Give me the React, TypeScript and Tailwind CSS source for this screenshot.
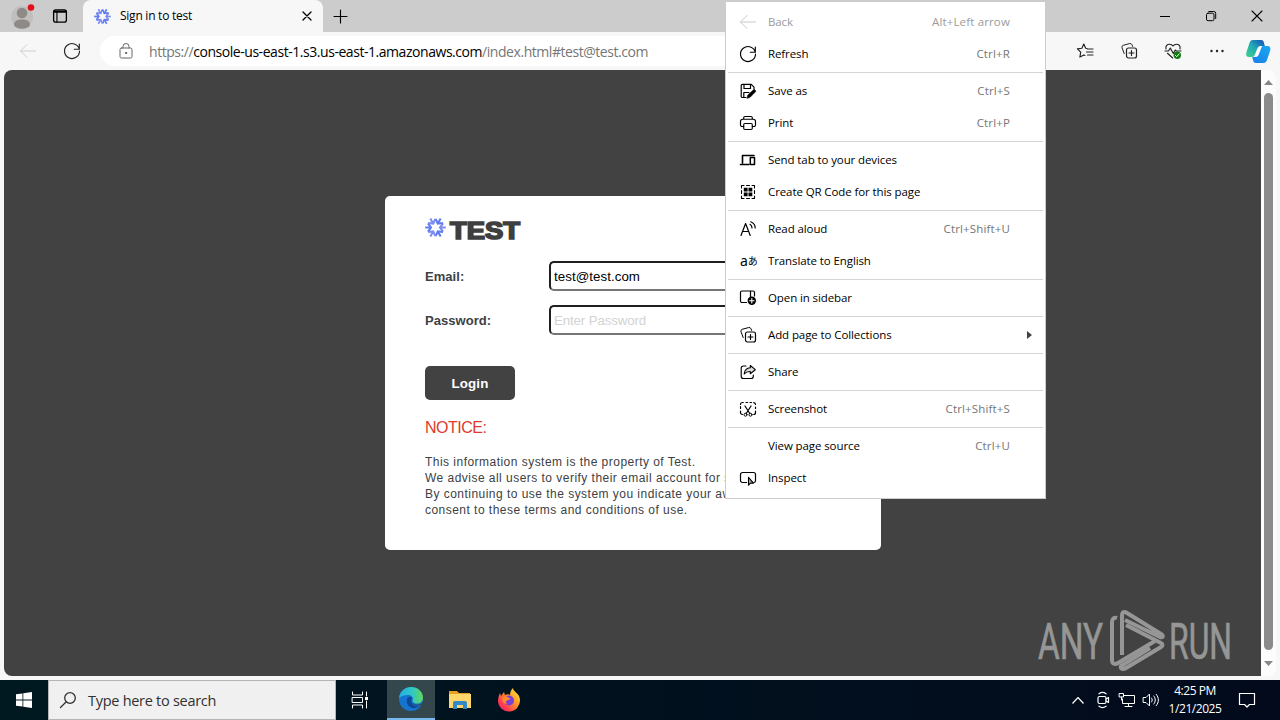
import type { ReactNode } from "react";

type IconProps = { children: ReactNode; className?: string; size?: number };

// Thin line icon on a 16px grid, the base of most glyphs in the window
function Icon({ children, className = "", size = 16 }: IconProps) {
  return (
    <svg
      width={size}
      height={size}
      viewBox="0 0 16 16"
      fill="none"
      stroke="currentColor"
      strokeLinecap="round"
      strokeLinejoin="round"
      className={`shrink-0 overflow-visible ${className}`}
    >
      {children}
    </svg>
  );
}

const BackIcon = () => (
  <Icon>
    <path d="M15.5 8H.8M7 1.5.5 8 7 14.5" />
  </Icon>
);

const RefreshIcon = () => (
  <Icon>
    <path d="M15.3 6.3A7.5 7.5 0 1 0 15.5 8M15.3 1v5.2h-5" strokeWidth="1.15" />
  </Icon>
);

const CollectionsIcon = () => (
  <Icon>
    <path d="M3.2 10.5 1 4.8a2 2 0 0 1 1.2-2.5L8.5.6a2 2 0 0 1 2.5 1.2l.6 1.6" />
    <rect x="5.5" y="5" width="10" height="10" rx="2" strokeWidth="1.2" />
    <path d="M10.5 7.5v5M8 10h5" strokeWidth="1.2" />
  </Icon>
);

const SaveIcon = () => (
  <Icon>
    <path d="M6 14.5H2.5a1.3 1.3 0 0 1-1.3-1.3V2.7a1.3 1.3 0 0 1 1.3-1.3h8.8l2.7 2.7v2M4 1.5v4h6.5v-4M3.8 14.3V9.5H9" strokeWidth="1.2" />
    <path d="m7 15.2.8-3.2 5.7-5.2c1-.8 2.8.8 2 2l-5.3 5.4z" fill="currentColor" strokeWidth=".5" />
  </Icon>
);

const PrintIcon = () => (
  <Icon>
    <path d="M3.7 4.2V2.7c0-.7.5-1.2 1.2-1.2h6.2c.7 0 1.2.5 1.2 1.2v1.5M3.7 11.5H2A1.5 1.5 0 0 1 .5 10V6.500c0-1.300 1-2.300 2.300-2.300h10.400c1.300 0 2.300 1 2.300 2.300V10a1.500 1.500 0 0 1-1.500 1.500h-1.700" strokeWidth="1.15" />
    <rect x="3.7" y="8.5" width="8.6" height="6" rx="1.2" strokeWidth="1.15" />
  </Icon>
);

const DevicesIcon = () => (
  <Icon>
    <path d="M2.5 11V3.500h11.500M.5 12.500h8.500" strokeWidth="1.6" />
    <rect x="10.3" y="5.5" width="4.2" height="7" strokeWidth="1.5" />
  </Icon>
);

const QrIcon = () => (
  <Icon>
    <path d="M1.500 4V1.500H4M12 1.500h2.500V4M14.500 12v2.500H12M4 14.500H1.500V12M6.500 1.500h3M6.500 14.500h3M1.500 6.500v3M14.500 6.500v3" strokeWidth="1.1" />
    <path d="M3.800 3.800h3.800v3.800H3.800zM8.500 3.800h3.800v3.800H8.500zM3.800 8.500h3.800v3.800H3.800zM8.500 8.500h3.800v3.800H8.500z" fill="currentColor" stroke="none" />
  </Icon>
);

const ReadAloudIcon = () => (
  <Icon>
    <path d="m1 14.500 4.600-12 4.600 12M2.700 10.500h5.800M10 3.300c1.300.7 2 2 2 3.700M10.800.8C13.700 2 15.200 4.200 15.200 7" strokeWidth="1.2" />
  </Icon>
);

const TranslateIcon = () => (
  <span className="flex h-4 w-4 shrink-0 items-center font-['Noto_Sans','Noto_Sans_CJK_JP',sans-serif] leading-none">
    <span className="-mt-px text-[14px]">a</span>
    <span className="text-[10px]">あ</span>
  </span>
);

const SidebarIcon = () => (
  <Icon>
    <path d="M6.500 12.500H2A1.500 1.500 0 0 1 .5 11V2.500A1.500 1.500 0 0 1 2 1h11a1.500 1.500 0 0 1 1.500 1.500V6M10.500 1v6" strokeWidth="1.2" />
    <circle cx="11.800" cy="10.800" r="4.200" fill="currentColor" stroke="none" />
    <path d="M11.800 8.600V13M9.600 10.800H14" stroke="white" strokeWidth="1.1" />
  </Icon>
);

const ShareIcon = () => (
  <Icon>
    <path d="M6 2H3.500a2.300 2.300 0 0 0-2.300 2.300v7.900a2.300 2.300 0 0 0 2.300 2.300h7.500a2.300 2.300 0 0 0 2.300-2.300V11" strokeWidth="1.15" />
    <path d="M10.300 1.500 15.300 5.700l-5 4V7.500C7.500 7.300 5.800 8.200 4.200 10c.3-3.800 2.500-5.900 6.100-6.200z" fill="#ddd" strokeWidth="1.1" />
  </Icon>
);

const ScreenshotIcon = () => (
  <Icon>
    <path d="M2.500 13.500A2 2 0 0 1 .5 11.500V10M.5 7.500V5.700M.5 3.500c0-1 .8-2 2-2h.8M6 1.500h1.600M10 1.500h1.500M13.700 1.600c1 .1 1.800.9 1.800 1.900M15.500 6v1.500M15.500 10v1.500c0 1-.7 2-1.800 2" strokeWidth="1.2" />
    <path d="m5 5 4.800 7.500M11 5l-4.800 7.500" strokeWidth="1.2" />
    <circle cx="5.500" cy="13.700" r="1.500" />
    <circle cx="10.500" cy="13.700" r="1.500" />
  </Icon>
);

const InspectIcon = () => (
  <Icon>
    <path d="M6.500 12.500h-4a2 2 0 0 1-2-2v-6a2 2 0 0 1 2-2h11a2 2 0 0 1 2 2v6c0 1-.5 1.800-1.500 2" strokeWidth="1.2" />
    <path d="M8.500 7.300v7.900l2-2.100h3z" fill="#aaa" strokeWidth="1.1" />
  </Icon>
);

type MenuItem = { label: string; icon?: ReactNode; shortcut?: string; disabled?: boolean; submenu?: boolean };

const MENU_GROUPS: MenuItem[][] = [
  [
    { label: "Back", icon: <BackIcon />, shortcut: "Alt+Left arrow", disabled: true },
    { label: "Refresh", icon: <RefreshIcon />, shortcut: "Ctrl+R" },
  ],
  [
    { label: "Save as", icon: <SaveIcon />, shortcut: "Ctrl+S" },
    { label: "Print", icon: <PrintIcon />, shortcut: "Ctrl+P" },
  ],
  [
    { label: "Send tab to your devices", icon: <DevicesIcon /> },
    { label: "Create QR Code for this page", icon: <QrIcon /> },
  ],
  [
    { label: "Read aloud", icon: <ReadAloudIcon />, shortcut: "Ctrl+Shift+U" },
    { label: "Translate to English", icon: <TranslateIcon /> },
  ],
  [{ label: "Open in sidebar", icon: <SidebarIcon /> }],
  [{ label: "Add page to Collections", icon: <CollectionsIcon />, submenu: true }],
  [{ label: "Share", icon: <ShareIcon /> }],
  [{ label: "Screenshot", icon: <ScreenshotIcon />, shortcut: "Ctrl+Shift+S" }],
  [
    { label: "View page source", shortcut: "Ctrl+U" },
    { label: "Inspect", icon: <InspectIcon /> },
  ],
];

function ContextMenu() {
  return (
    <div className="absolute left-[725px] top-px w-[321px] border border-[#ccc] bg-white py-1 text-[11.5px] tracking-[-0.1px] text-black">
      {MENU_GROUPS.map((group, i) => (
        <div key={group[0].label}>
          {i > 0 && <div className="mx-[2px] my-[2px] h-px bg-[#d4d4d4]" />}
          {group.map((item) => (
            <div key={item.label} className={`flex h-8 items-center pl-[14px] ${item.disabled ? "text-[#9b9b9b]" : ""}`}>
              <span className={`w-7 ${item.disabled ? "text-[#c8c8c8]" : ""}`}>{item.icon}</span>
              <span className="flex-1 whitespace-nowrap">{item.label}</span>
              {item.shortcut && (
                <span className={`mr-[35px] tracking-[0.15px] ${item.disabled ? "" : "text-[#767676]"}`}>{item.shortcut}</span>
              )}
              {item.submenu && (
                <svg width="5" height="8" className="mr-[13px]">
                  <path d="M0 0l5 4-5 4z" fill="#444" />
                </svg>
              )}
            </div>
          ))}
        </div>
      ))}
    </div>
  );
}

// Six-armed snowflake mark shared by the tab and the login card
function SnowLogo({ size }: { size: number }) {
  return (
    <svg width={size} height={size} viewBox="0 0 20 20" fill="none" className="shrink-0">
      {[0, 60, 120, 180, 240, 300].map((angle) => (
        <g key={angle} transform={`rotate(${angle} 10 10)`} stroke={angle % 120 ? "#5f7cf2" : "#7d8cf0"}>
          <path d="M14.5 10h5.3" strokeWidth="2" />
          <path d="M17.2 6 14.300 10l2.900 4" strokeWidth="2" />
        </g>
      ))}
    </svg>
  );
}

function TabStrip() {
  return (
    <div className="flex h-8 bg-[#ccc]">
      <div className="flex w-[83px] items-center">
        <svg width="24" height="26" viewBox="0 0 24 26" className="ml-[11px] mt-px">
          <circle cx="11" cy="13" r="11" fill="#c1bfbd" />
          <circle cx="11" cy="9" r="5.300" fill="#8d8a88" />
          <path d="M3 21c0-4 3-5.500 8-5.500s8 1.500 8 5.500c-2 5-14 5-16 0z" fill="#8d8a88" />
          <circle cx="20" cy="3.500" r="3.300" fill="#e3101b" />
        </svg>
        <Icon className="ml-[18px]" size={14}>
          <rect x=".7" y="1" width="14.600" height="14" rx="2.500" strokeWidth="1.500" />
          <path d="M1.500 3h13" strokeWidth="2.500" />
          <path d="M4.500 4v11" strokeWidth="1.300" />
        </Icon>
      </div>
      <div className="flex w-[240px] items-center rounded-t-lg bg-[#f7f7f7] pl-[11px]">
        <SnowLogo size={17} />
        <span className="ml-[9px] flex-1 text-[12px] tracking-[-0.25px] text-black">Sign in to test</span>
        <Icon size={8} className="mr-3">
          <path d="m0 0 16 16M16 0 0 16" strokeWidth="2.600" />
        </Icon>
      </div>
      <div className="flex flex-1 items-center pl-[11px]">
        <Icon size={13}>
          <path d="M8 0v16M0 8h16" strokeWidth="1.400" />
        </Icon>
        <div className="ml-auto flex items-center gap-9 pr-[18px]">
          <svg width="10" height="10">
            <path d="M0 5.500h10" stroke="black" />
          </svg>
          <Icon size={10}>
            <rect x=".8" y="3.500" width="12" height="12" rx="2.500" strokeWidth="1.600" />
            <path d="M4.500.8h8A3 3 0 0 1 15.500 4v8" strokeWidth="1.600" />
          </Icon>
          <Icon size={10}>
            <path d="m0 0 16 16M16 0 0 16" strokeWidth="1.700" />
          </Icon>
        </div>
      </div>
    </div>
  );
}

function Toolbar() {
  return (
    <div className="flex h-[38px] items-center bg-[#f7f7f7]">
      <div className="flex w-[100px] gap-7 pl-5 text-[#222]">
        <span className="text-[#cfcfcf]"><BackIcon /></span>
        <RefreshIcon />
      </div>
      <div className="flex h-[30px] w-[860px] items-center rounded-full bg-white pl-[18px]">
        <Icon className="text-[#666]">
          <rect x="2" y="5" width="12" height="10" rx="1.500" />
          <path d="M5 5V3.500a3 3 0 0 1 6 0V5" />
          <circle cx="8" cy="10" r=".7" fill="currentColor" />
        </Icon>
        <div className="ml-[15px] whitespace-nowrap text-[14px] tracking-[-0.45px] text-[#767676]">
          https://<span className="text-black">console-us-east-1.s3.us-east-1.amazonaws.com</span>/index.html#test@test.com
        </div>
      </div>
      <div className="ml-auto flex items-center gap-7 pr-[9px] text-[#222]">
        <Icon className="mr-[12px]">
          <rect x="4" y="2" width="15" height="12" rx="2" />
        </Icon>
        <Icon>
          <path d="M10 5.500 8.700 5.200 6.800 1 4.900 5.200.4 5.900l3.300 3.300-.8 4.900 4-2.200 1 .5M10.500 6H16M9.500 9H16M10.500 12H16" strokeWidth="1.150" />
        </Icon>
        <CollectionsIcon />
        <Icon>
          <path d="M1 6C.3 3 2.300 1.200 4.500 1.200 6.300 1.200 7.300 2 8 3c.7-1 1.700-1.800 3.500-1.800 2.200 0 4.200 1.800 3.500 4.800M0 8h3.500L5.300 5l3 5.500L10.300 7l1 1H16M2.500 10.300 7.700 15" strokeWidth="1.150" />
          <circle cx="12.300" cy="12.300" r="3.700" fill="#107c10" stroke="none" />
          <path d="m10.500 12.500 1.200 1.200 2.400-2.800" stroke="white" />
        </Icon>
        <svg width="14" height="4" className="mx-px" fill="#222">
          <circle cx="1.500" cy="2" r="1.200" />
          <circle cx="7" cy="2" r="1.200" />
          <circle cx="12.500" cy="2" r="1.200" />
        </svg>
        <svg width="25" height="23" viewBox="0 0 25 23" className="-ml-[7px] overflow-visible">
          <defs>
            <linearGradient id="pilotA" x1="0" y1="1" x2="1" y2="0">
              <stop stopColor="#45d28c" />
              <stop offset=".5" stopColor="#20a9b5" />
              <stop offset="1" stopColor="#1649b8" />
            </linearGradient>
            <linearGradient id="pilotB" x1="0" y1="1" x2="1" y2="0">
              <stop stopColor="#187fe9" />
              <stop offset="1" stopColor="#1ba9ef" />
            </linearGradient>
          </defs>
          <path d="M7 0h8c2 0 2.500 1 3 3l.8 3h-4c-2 0-3 1-3.700 3l-2 5c-.7 2-1.500 3-3.500 3H3c-2.500 0-3.500-2-2.700-4.500L3.500 3C4.200 1 5 0 7 0z" fill="url(#pilotA)" />
          <path d="M17.500 23h-7.500c-2 0-2.500-1-3-3l-.8-3c3 0 5 0 6.500-4l2-5c.7-2 1.500-2 3.500-2h3.300c2.500 0 3.500 2 2.700 4.500L21 20c-.7 2-1.500 3-3.500 3z" fill="url(#pilotB)" />
          <path d="m10.300 14.500 3.300-7.500c.5-1 1.200-1 2.400-1l-3.200 8.500c-.8 2-2 2.500-4.300 2.500 1 0 1.400-1 1.800-2.500z" fill="white" />
        </svg>
      </div>
    </div>
  );
}

function LoginCard() {
  return (
    <div className="ml-[381px] mt-[126px] h-[354px] w-[496px] rounded-[5px] bg-white px-10 font-['Liberation_Sans',Arial,sans-serif] text-[#3d4144]">
      <div className="flex h-[65px] items-start pt-[21px]">
        <SnowLogo size={21} />
        <svg width="78" height="30" className="ml-[2px]">
          <text x="2" y="22" fontSize="24" fontWeight="900" fill="#3f3f3f" stroke="#3f3f3f" strokeWidth="1.700" textLength="70" lengthAdjust="spacingAndGlyphs">
            TEST
          </text>
        </svg>
      </div>
      <div className="flex flex-col gap-[14px]">
        <label className="flex h-[30px] items-center text-[13px] font-bold tracking-[0.05px]">
          <span className="w-[124px] pt-0.5">Email:</span>
          <input defaultValue="test@test.com" className="h-[30px] w-[292px] rounded-[5px] border-2 border-[#1f2020] border-b-[#767676] border-r-[#767676] px-[3px] text-[13.33px] font-normal tracking-[0.05px] text-black" />
        </label>
        <label className="flex h-[30px] items-center text-[13px] font-bold tracking-[0.05px]">
          <span className="w-[124px] pt-0.5">Password:</span>
          <input type="password" placeholder="Enter Password" className="h-[30px] w-[292px] rounded-[5px] border-2 border-[#1f2020] border-b-[#767676] border-r-[#767676] px-[3px] text-[13.33px] font-normal tracking-[-0.15px] placeholder:text-[#d3d3d3]" />
        </label>
      </div>
      <button className="mt-[31px] block h-[34px] w-[90px] rounded-[5px] bg-[#424242] pt-0.5 text-[13.33px] font-bold tracking-[0.1px] text-white">Login</button>
      <h2 className="mt-[18px] text-[16px] leading-5 tracking-[-0.5px] text-[#e03a2e]">NOTICE:</h2>
      <p className="mt-4 whitespace-nowrap text-[12px] leading-4 tracking-[0.47px]">
        This information system is the property of Test.
        <br />
        We advise all users to verify their email account for security
        <br />
        By continuing to use the system you indicate your awareness
        <br />
        consent to these terms and conditions of use.
      </p>
    </div>
  );
}

function Watermark() {
  return (
    <svg width="220" height="66" viewBox="1035 607 220 66" className="absolute bottom-[3px] left-[1031px] overflow-visible font-[Roboto,sans-serif]" fill="#969696">
      <g stroke="#969696" strokeWidth=".7">
        <text x="1038" y="659" fontSize="50" textLength="65" lengthAdjust="spacingAndGlyphs">ANY</text>
        <text x="1169" y="659" fontSize="50" textLength="63" lengthAdjust="spacingAndGlyphs">RUN</text>
      </g>
      <g fill="none" stroke="#969696" strokeWidth="4" strokeLinejoin="round">
        <path d="M1117 618c-3-1-5 1-5 4v38c0 4 3 5 6 3l37-22" />
        <path d="M1122 655v-39c0-4 2-5 5-3l34 21c3 2 2 4-1 3l-35-17" />
        <path d="m1126 625 35 18c2 1 2 3 0 4l-35 21c-3 2-6 1-5-2l29-18" />
      </g>
    </svg>
  );
}

function PageArea() {
  return (
    <div className="flex h-[610px] bg-[#f7f7f7] pb-1 pl-1">
      <main className="relative w-[1257px] overflow-hidden rounded-l-lg bg-[#424242]">
        <LoginCard />
        <Watermark />
      </main>
      <div className="flex w-[15px] flex-col items-center justify-between rounded-r-lg bg-[#fcfcfc] pb-[10px] pt-[10px]">
        <svg width="9" height="5"><path d="M0 5 4.500 0 9 5z" fill="#858585" /></svg>
        <div className="mb-[11px] mt-2 w-[9px] flex-1 rounded-full bg-[#8b8b8b]" />
        <svg width="9" height="5"><path d="m0 0 4.500 5L9 0z" fill="#858585" /></svg>
      </div>
    </div>
  );
}

function EdgeLogo() {
  return (
    <svg width="24" height="24" viewBox="0 0 24 24">
      <defs>
        <linearGradient id="edgeTop" x1="0" x2="1">
          <stop stopColor="#28aee5" />
          <stop offset=".55" stopColor="#2fc7c4" />
          <stop offset="1" stopColor="#62d957" />
        </linearGradient>
      </defs>
      <circle cx="12" cy="12" r="12" fill="#1475cf" />
      <path d="M0 11C1 4 6 0 12 0c7 0 12 5 12 10.500 0 4-3 6-6 6-3.500 0-5-1.500-4.300-3C15 10 12 8 9 8c-4 0-7 1-9 3z" fill="url(#edgeTop)" />
      <path d="M8 12c-1.500 5 3 10 8 9 2-.3 4-1.500 5.500-3-3 2-8 1-9-3-.6-2 .5-3 .5-4.500-2-1.500-4-.5-5 1.500z" fill="#10499a" />
      <path d="M13.500 14c-.3 3 5 5 9 2.500L24 15v4l-3-1c-4 1-8-.5-7.500-4z" fill="#34474c" />
    </svg>
  );
}

function FolderLogo() {
  return (
    <svg width="22" height="20" viewBox="0 0 22 20">
      <path d="M0 1h8l2 2h11v4H0z" fill="#e8a21e" />
      <path d="M0 4h22v14H0z" fill="#ffd76b" />
      <path d="M4 19v-6a2 2 0 0 1 2-2h10a2 2 0 0 1 2 2v6h-4v-4H8v4z" fill="#3488c5" />
    </svg>
  );
}

function FirefoxLogo() {
  return (
    <svg width="24" height="24" viewBox="0 0 24 24">
      <defs>
        <linearGradient id="foxBody" x1="1" y1="0" x2="0" y2="1">
          <stop stopColor="#fff044" />
          <stop offset=".4" stopColor="#ff9b28" />
          <stop offset=".75" stopColor="#ff3a50" />
          <stop offset="1" stopColor="#e31587" />
        </linearGradient>
      </defs>
      <path d="M3 5 4 8l3-4 1 3c2-1 4-1 5 0 0-3 1-5 3-7 0 4 7 5 7 12a11 11 0 0 1-22 1c0-3 1-6 2-8z" fill="url(#foxBody)" />
      <circle cx="12" cy="12.500" r="5" fill="#7b41d6" />
      <path d="M6 9c3-2 5 0 6 1 2 0 1 2-1 2-2 1-3 2-1 4-3 0-6-3-4-7z" fill="#ff8a2a" />
    </svg>
  );
}

function Taskbar() {
  return (
    <div className="flex h-10 items-stretch bg-gradient-to-r from-[#001820] to-[#020a1c] text-white">
      <div className="flex w-12 items-center justify-center">
        <svg width="16" height="16" viewBox="0 0 16 16" fill="white">
          <path d="M0 2.300 6.500 1.400v6.200H0zM7.300 1.300 16 0v7.600H7.300zM0 8.400h6.500v6.200L0 13.700zM7.300 8.400H16V16l-8.700-1.300z" />
        </svg>
      </div>
      <div className="flex w-72 items-center border border-[#b5b5b5] bg-[#f0f0f0] pl-[11px] text-[#303030]">
        <Icon>
          <circle cx="10" cy="6" r="5.300" strokeWidth="1.300" />
          <path d="M6 10 .5 15.500" strokeWidth="1.300" />
        </Icon>
        <span className="ml-[12px] pt-0.5 text-[14.5px] tracking-[-0.28px]">Type here to search</span>
      </div>
      <div className="flex w-[51px] items-center justify-center pr-[3px]">
        <Icon>
          <path d="M.5 0v3h10V0M.5 5.500h10v5H.5zM.5 16v-3h10v3M14.500 0v4M14.500 9v7" />
          <path d="M13 5h3v3h-3z" fill="white" stroke="none" />
        </Icon>
      </div>
      <div className="flex w-12 items-center justify-center border-b-2 border-[#76b9ed] bg-[#34474c]"><EdgeLogo /></div>
      <div className="flex w-[50px] items-center justify-center"><FolderLogo /></div>
      <div className="flex w-12 items-center justify-center"><FirefoxLogo /></div>
      <div className="ml-auto flex items-center">
        <svg width="12" height="7" fill="none" stroke="white" strokeWidth="1.200"><path d="m.5 6.500 5.500-6 5.500 6" /></svg>
        <Icon className="ml-[11px]">
          <rect x="3" y="4.500" width="8" height="7" rx="1.500" strokeWidth="1.200" />
          <path d="m11 7 2.500-1.500v5L11 9M4 1.800c2-1.500 5-1.500 7 0M4 14.200c2 1.500 5 1.500 7 0" strokeWidth="1.200" />
        </Icon>
        <Icon className="ml-2">
          <path d="M5 3.500h10.500v8H3.500V7M9.500 11.500v3M6 14.500h7M.5 1.500h4V5h-4zM2.500 5v3" />
        </Icon>
        <Icon className="ml-2">
          <path d="M.5 5.500H3L6.500 2v12L3 10.500H.5zM8.500 6c1 1.300 1 2.700 0 4M10.800 4c2 2.500 2 5.500 0 8M13.200 2.300c3 3.700 3 7.700 0 11.400" />
        </Icon>
        <div className="ml-[6px] w-[60px] text-center text-[12px] leading-[18px] tracking-[-0.45px]">
          <div>4:25 PM</div>
          <div>1/21/2025</div>
        </div>
        <Icon className="ml-[14px] mr-[25px]">
          <path d="M.5 1.500h15v11h-5L8 15l-2.500-2.500h-5z" strokeWidth="1.200" />
        </Icon>
      </div>
    </div>
  );
}

export default function App() {
  return (
    <div className="relative flex h-[720px] w-[1280px] flex-col overflow-hidden bg-[#f7f7f7] font-['Open_Sans','Noto_Sans',sans-serif]">
      <TabStrip />
      <Toolbar />
      <PageArea />
      <Taskbar />
      <ContextMenu />
    </div>
  );
}
